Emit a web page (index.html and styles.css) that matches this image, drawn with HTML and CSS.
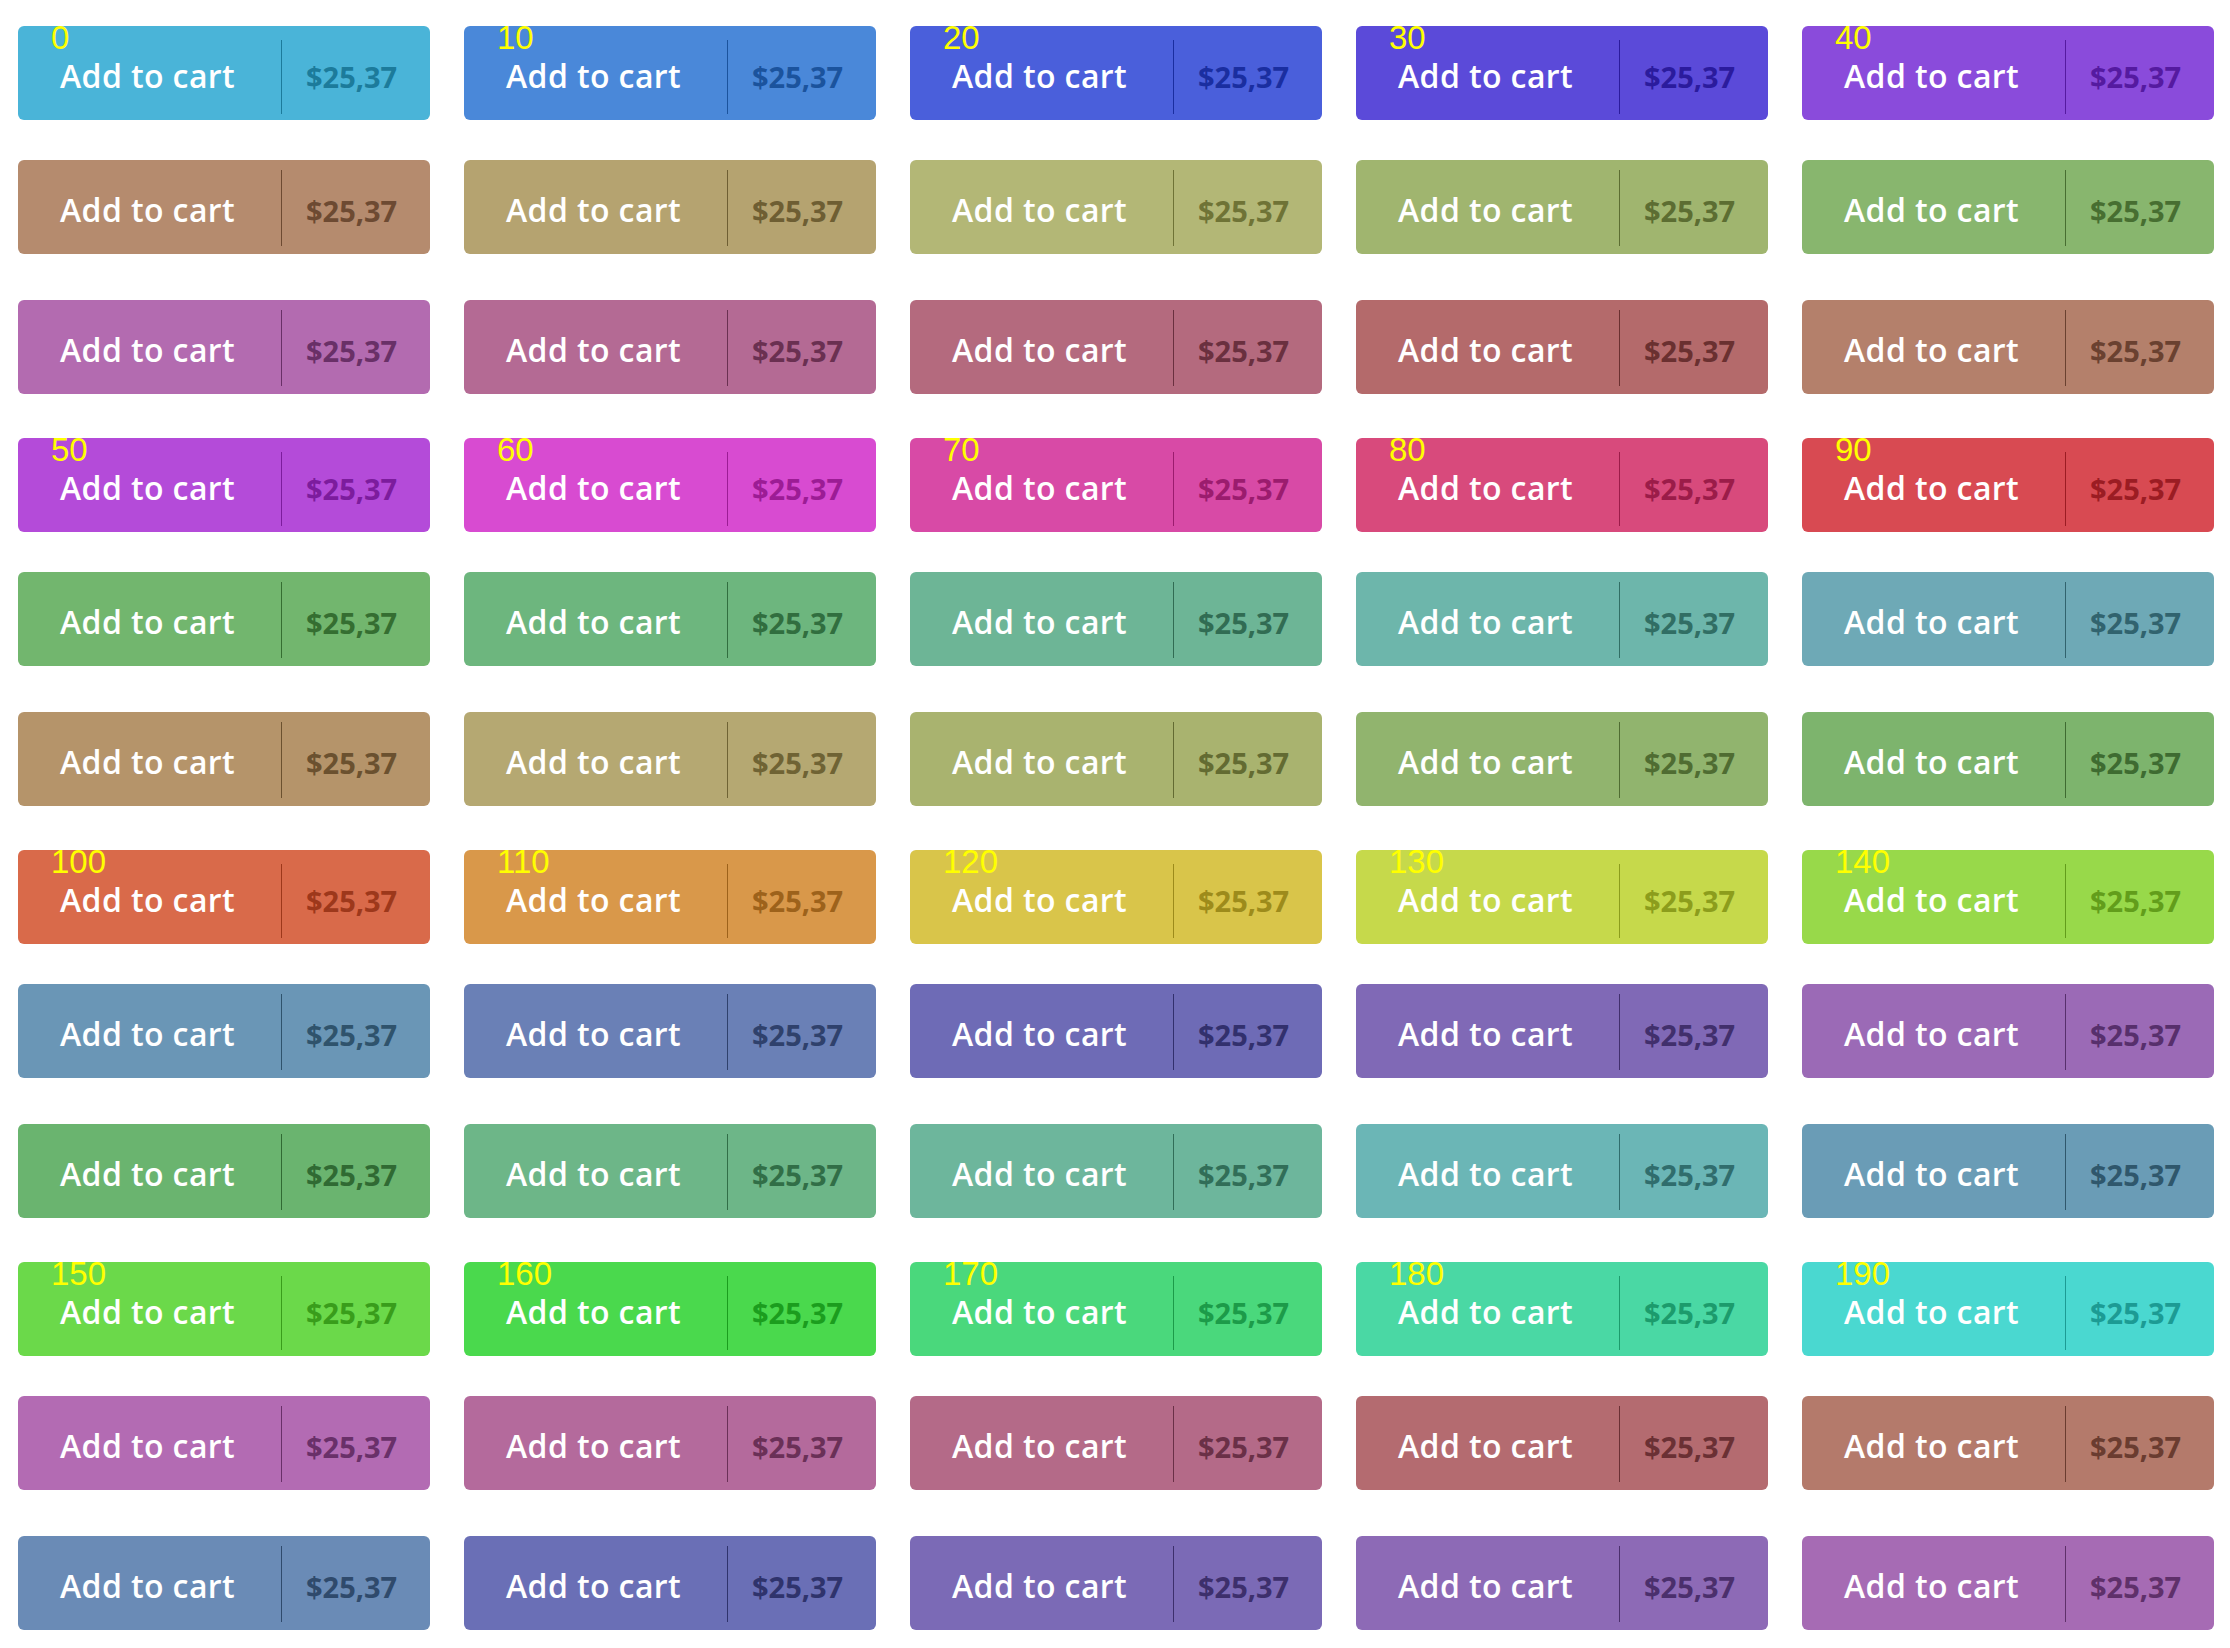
FILE: index.html
```html
<!DOCTYPE html>
<html>
<head>
<meta charset="utf-8">
<title>Add to cart</title>
<link rel="stylesheet" href="styles.css">
</head>

<body>
<div class="board">
	<div class="row lead r1">
		<a class="btn"><span class="hue">0</span><span class="label">Add to cart</span><span class="price">$25,37</span></a>
		<a class="btn"><span class="hue">10</span><span class="label">Add to cart</span><span class="price">$25,37</span></a>
		<a class="btn"><span class="hue">20</span><span class="label">Add to cart</span><span class="price">$25,37</span></a>
		<a class="btn"><span class="hue">30</span><span class="label">Add to cart</span><span class="price">$25,37</span></a>
		<a class="btn"><span class="hue">40</span><span class="label">Add to cart</span><span class="price">$25,37</span></a>
	</div>
	<div class="row mid r2">
		<a class="btn"><span class="label">Add to cart</span><span class="price">$25,37</span></a>
		<a class="btn"><span class="label">Add to cart</span><span class="price">$25,37</span></a>
		<a class="btn"><span class="label">Add to cart</span><span class="price">$25,37</span></a>
		<a class="btn"><span class="label">Add to cart</span><span class="price">$25,37</span></a>
		<a class="btn"><span class="label">Add to cart</span><span class="price">$25,37</span></a>
	</div>
	<div class="row tail r3">
		<a class="btn"><span class="label">Add to cart</span><span class="price">$25,37</span></a>
		<a class="btn"><span class="label">Add to cart</span><span class="price">$25,37</span></a>
		<a class="btn"><span class="label">Add to cart</span><span class="price">$25,37</span></a>
		<a class="btn"><span class="label">Add to cart</span><span class="price">$25,37</span></a>
		<a class="btn"><span class="label">Add to cart</span><span class="price">$25,37</span></a>
	</div>

	<div class="row lead r4">
		<a class="btn"><span class="hue">50</span><span class="label">Add to cart</span><span class="price">$25,37</span></a>
		<a class="btn"><span class="hue">60</span><span class="label">Add to cart</span><span class="price">$25,37</span></a>
		<a class="btn"><span class="hue">70</span><span class="label">Add to cart</span><span class="price">$25,37</span></a>
		<a class="btn"><span class="hue">80</span><span class="label">Add to cart</span><span class="price">$25,37</span></a>
		<a class="btn"><span class="hue">90</span><span class="label">Add to cart</span><span class="price">$25,37</span></a>
	</div>
	<div class="row mid r5">
		<a class="btn"><span class="label">Add to cart</span><span class="price">$25,37</span></a>
		<a class="btn"><span class="label">Add to cart</span><span class="price">$25,37</span></a>
		<a class="btn"><span class="label">Add to cart</span><span class="price">$25,37</span></a>
		<a class="btn"><span class="label">Add to cart</span><span class="price">$25,37</span></a>
		<a class="btn"><span class="label">Add to cart</span><span class="price">$25,37</span></a>
	</div>
	<div class="row tail r6">
		<a class="btn"><span class="label">Add to cart</span><span class="price">$25,37</span></a>
		<a class="btn"><span class="label">Add to cart</span><span class="price">$25,37</span></a>
		<a class="btn"><span class="label">Add to cart</span><span class="price">$25,37</span></a>
		<a class="btn"><span class="label">Add to cart</span><span class="price">$25,37</span></a>
		<a class="btn"><span class="label">Add to cart</span><span class="price">$25,37</span></a>
	</div>

	<div class="row lead r7">
		<a class="btn"><span class="hue">100</span><span class="label">Add to cart</span><span class="price">$25,37</span></a>
		<a class="btn"><span class="hue">110</span><span class="label">Add to cart</span><span class="price">$25,37</span></a>
		<a class="btn"><span class="hue">120</span><span class="label">Add to cart</span><span class="price">$25,37</span></a>
		<a class="btn"><span class="hue">130</span><span class="label">Add to cart</span><span class="price">$25,37</span></a>
		<a class="btn"><span class="hue">140</span><span class="label">Add to cart</span><span class="price">$25,37</span></a>
	</div>
	<div class="row mid r8">
		<a class="btn"><span class="label">Add to cart</span><span class="price">$25,37</span></a>
		<a class="btn"><span class="label">Add to cart</span><span class="price">$25,37</span></a>
		<a class="btn"><span class="label">Add to cart</span><span class="price">$25,37</span></a>
		<a class="btn"><span class="label">Add to cart</span><span class="price">$25,37</span></a>
		<a class="btn"><span class="label">Add to cart</span><span class="price">$25,37</span></a>
	</div>
	<div class="row tail r9">
		<a class="btn"><span class="label">Add to cart</span><span class="price">$25,37</span></a>
		<a class="btn"><span class="label">Add to cart</span><span class="price">$25,37</span></a>
		<a class="btn"><span class="label">Add to cart</span><span class="price">$25,37</span></a>
		<a class="btn"><span class="label">Add to cart</span><span class="price">$25,37</span></a>
		<a class="btn"><span class="label">Add to cart</span><span class="price">$25,37</span></a>
	</div>

	<div class="row lead r10">
		<a class="btn"><span class="hue">150</span><span class="label">Add to cart</span><span class="price">$25,37</span></a>
		<a class="btn"><span class="hue">160</span><span class="label">Add to cart</span><span class="price">$25,37</span></a>
		<a class="btn"><span class="hue">170</span><span class="label">Add to cart</span><span class="price">$25,37</span></a>
		<a class="btn"><span class="hue">180</span><span class="label">Add to cart</span><span class="price">$25,37</span></a>
		<a class="btn"><span class="hue">190</span><span class="label">Add to cart</span><span class="price">$25,37</span></a>
	</div>
	<div class="row mid r11">
		<a class="btn"><span class="label">Add to cart</span><span class="price">$25,37</span></a>
		<a class="btn"><span class="label">Add to cart</span><span class="price">$25,37</span></a>
		<a class="btn"><span class="label">Add to cart</span><span class="price">$25,37</span></a>
		<a class="btn"><span class="label">Add to cart</span><span class="price">$25,37</span></a>
		<a class="btn"><span class="label">Add to cart</span><span class="price">$25,37</span></a>
	</div>
	<div class="row tail r12">
		<a class="btn"><span class="label">Add to cart</span><span class="price">$25,37</span></a>
		<a class="btn"><span class="label">Add to cart</span><span class="price">$25,37</span></a>
		<a class="btn"><span class="label">Add to cart</span><span class="price">$25,37</span></a>
		<a class="btn"><span class="label">Add to cart</span><span class="price">$25,37</span></a>
		<a class="btn"><span class="label">Add to cart</span><span class="price">$25,37</span></a>
	</div>
</div>
</body>
</html>
```

FILE: styles.css
```css
body{
	margin:0;
	background:#fff;
}
.board{
	padding:26px 0 0 18px;
}
.row{
	display:flex;
	gap:34px;
}
/* every third row starts a new hue step */
.lead{margin-top:44px;}
.lead:first-child{margin-top:0;}
.mid{margin-top:40px;}
.tail{margin-top:46px;}

.btn{
	--bg:#4ab4d8;
	position:relative;
	display:flex;
	align-items:flex-start;
	width:412px;
	height:94px;
	border-radius:6px;
	background:var(--bg);
	text-decoration:none;
	cursor:pointer;
}
.label{
	box-sizing:border-box;
	width:263px;
	padding:6px 0 0 42px;
	font:600 32px/88px "Open Sans", "Liberation Sans", sans-serif;
	letter-spacing:.4px;
	color:#fff;
	white-space:nowrap;
}
.price{
	margin-top:10px;
	padding:5px 0 0 24px;
	border-left:1px solid;
	font:700 29px/71px "Open Sans", "Liberation Sans", sans-serif;
	color:color-mix(in srgb, var(--bg) 50%, #000);
	white-space:nowrap;
}
@supports (color: hsl(from red h s calc(l - 20))){
	.price{
		color:hsl(from var(--bg) h calc(s + 5) calc(l - 26));
	}
	.lead .price{
		color:hsl(from var(--bg) h calc(s + 5) calc(l - 21));
	}
}
.lead .price{
	margin-top:14px;
	padding-top:1px;
	padding-bottom:2px;
}
.hue{
	position:absolute;
	left:33px;
	top:-4px;
	font:33px/32px "Liberation Sans", Arial, sans-serif;
	color:#ffff00;
}

/* hue 0 - 40 */
.r1 .btn:nth-child(1){--bg:#4ab4d8;}
.r1 .btn:nth-child(2){--bg:#4a88d9;}
.r1 .btn:nth-child(3){--bg:#4a5fdb;}
.r1 .btn:nth-child(4){--bg:#5b4ad9;}
.r1 .btn:nth-child(5){--bg:#8a4bdb;}
.r2 .btn:nth-child(1){--bg:#b58b6e;}
.r2 .btn:nth-child(2){--bg:#b5a370;}
.r2 .btn:nth-child(3){--bg:#b3b776;}
.r2 .btn:nth-child(4){--bg:#a0b56f;}
.r2 .btn:nth-child(5){--bg:#88b66e;}
.r3 .btn:nth-child(1){--bg:#b36bb0;}
.r3 .btn:nth-child(2){--bg:#b46a94;}
.r3 .btn:nth-child(3){--bg:#b46a7e;}
.r3 .btn:nth-child(4){--bg:#b46a6b;}
.r3 .btn:nth-child(5){--bg:#b4806b;}

/* hue 50 - 90 */
.r4 .btn:nth-child(1){--bg:#b44bd9;}
.r4 .btn:nth-child(2){--bg:#d84bd1;}
.r4 .btn:nth-child(3){--bg:#d84aa6;}
.r4 .btn:nth-child(4){--bg:#d84a7c;}
.r4 .btn:nth-child(5){--bg:#d84a52;}
.r5 .btn:nth-child(1){--bg:#72b66e;}
.r5 .btn:nth-child(2){--bg:#6db67e;}
.r5 .btn:nth-child(3){--bg:#6db596;}
.r5 .btn:nth-child(4){--bg:#6db6ab;}
.r5 .btn:nth-child(5){--bg:#6ea9b6;}
.r6 .btn:nth-child(1){--bg:#b5946a;}
.r6 .btn:nth-child(2){--bg:#b5a872;}
.r6 .btn:nth-child(3){--bg:#a9b36f;}
.r6 .btn:nth-child(4){--bg:#91b46e;}
.r6 .btn:nth-child(5){--bg:#7db46d;}

/* hue 100 - 140 */
.r7 .btn:nth-child(1){--bg:#d96a4a;}
.r7 .btn:nth-child(2){--bg:#d9984a;}
.r7 .btn:nth-child(3){--bg:#d9c54a;}
.r7 .btn:nth-child(4){--bg:#c6d94b;}
.r7 .btn:nth-child(5){--bg:#98d94a;}
.r8 .btn:nth-child(1){--bg:#6a96b6;}
.r8 .btn:nth-child(2){--bg:#6a80b6;}
.r8 .btn:nth-child(3){--bg:#6e6bb6;}
.r8 .btn:nth-child(4){--bg:#8069b6;}
.r8 .btn:nth-child(5){--bg:#9b6ab6;}
.r9 .btn:nth-child(1){--bg:#6ab46f;}
.r9 .btn:nth-child(2){--bg:#6db688;}
.r9 .btn:nth-child(3){--bg:#6db69c;}
.r9 .btn:nth-child(4){--bg:#6bb6b6;}
.r9 .btn:nth-child(5){--bg:#6a9cb6;}

/* hue 150 - 190 */
.r10 .btn:nth-child(1){--bg:#6bd94a;}
.r10 .btn:nth-child(2){--bg:#4ad94d;}
.r10 .btn:nth-child(3){--bg:#4ad87c;}
.r10 .btn:nth-child(4){--bg:#4ad8a4;}
.r10 .btn:nth-child(5){--bg:#4ad8d0;}
.r11 .btn:nth-child(1){--bg:#b36bb3;}
.r11 .btn:nth-child(2){--bg:#b46a9c;}
.r11 .btn:nth-child(3){--bg:#b46a88;}
.r11 .btn:nth-child(4){--bg:#b46b70;}
.r11 .btn:nth-child(5){--bg:#b47a6b;}
.r12 .btn:nth-child(1){--bg:#6a8bb6;}
.r12 .btn:nth-child(2){--bg:#6a6fb6;}
.r12 .btn:nth-child(3){--bg:#7b6ab6;}
.r12 .btn:nth-child(4){--bg:#8d6ab6;}
.r12 .btn:nth-child(5){--bg:#a66bb4;}
```
